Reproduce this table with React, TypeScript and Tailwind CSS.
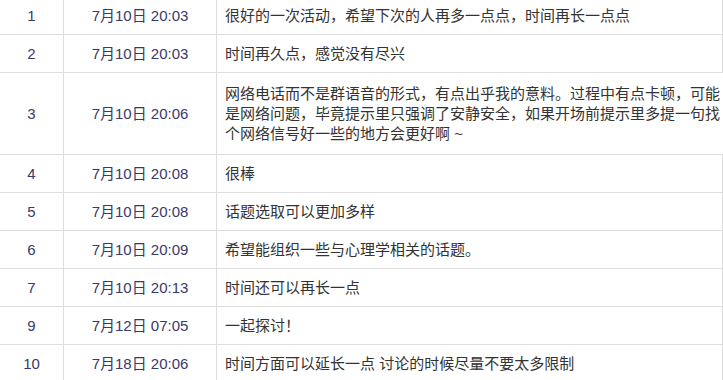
const rows: { no: string; time: string; lines: string[] }[] = [
  { no: "1", time: "7月10日 20:03", lines: ["很好的一次活动，希望下次的人再多一点点，时间再长一点点"] },
  { no: "2", time: "7月10日 20:03", lines: ["时间再久点，感觉没有尽兴"] },
  {
    no: "3",
    time: "7月10日 20:06",
    lines: [
      "网络电话而不是群语音的形式，有点出乎我的意料。过程中有点卡顿，可能",
      "是网络问题，毕竟提示里只强调了安静安全，如果开场前提示里多提一句找",
      "个网络信号好一些的地方会更好啊 ~",
    ],
  },
  { no: "4", time: "7月10日 20:08", lines: ["很棒"] },
  { no: "5", time: "7月10日 20:08", lines: ["话题选取可以更加多样"] },
  { no: "6", time: "7月10日 20:09", lines: ["希望能组织一些与心理学相关的话题。"] },
  { no: "7", time: "7月10日 20:13", lines: ["时间还可以再长一点"] },
  { no: "9", time: "7月12日 07:05", lines: ["一起探讨！"] },
  { no: "10", time: "7月18日 20:06", lines: ["时间方面可以延长一点 讨论的时候尽量不要太多限制"] },
];

export default function App() {
  return (
    <div className="w-[723px] h-[380px] overflow-hidden bg-white font-['Liberation_Sans','Noto_Sans_CJK_SC',sans-serif] text-[15px] leading-[20px]">
      <div className="-mt-[4px]">
        {rows.map((row) => {
          const multi = row.lines.length > 1;
          const py = multi ? "py-[10.5px]" : "py-[8.5px]";
          return (
            <div key={row.no} className="flex border-t border-[#dddddd]">
              <div className={`w-[64px] shrink-0 flex items-center justify-center border-r border-[#dddddd] text-[#39396b] ${py}`}>
                {row.no}
              </div>
              <div className={`w-[153px] shrink-0 flex items-center justify-center border-r border-[#dddddd] text-[#39396b] ${py}`}>
                {row.time}
              </div>
              <div className={`flex-1 border-r border-[#dddddd] pl-[8px] pr-[10px] text-[#333333] ${py}`}>
                {row.lines.map((line, i) => (
                  <div
                    key={i}
                    className={multi && i < row.lines.length - 1 ? "text-justify [text-align-last:justify] whitespace-nowrap" : "whitespace-nowrap"}
                  >
                    {line}
                  </div>
                ))}
              </div>
            </div>
          );
        })}
      </div>
    </div>
  );
}
